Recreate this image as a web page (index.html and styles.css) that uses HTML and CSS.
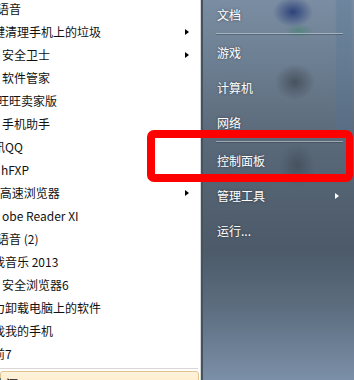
FILE: index.html
```html
<!DOCTYPE html>
<html lang="zh-CN">

<head>
    <meta charset="UTF-8">
    <meta name="viewport" content="width=device-width, initial-scale=1.0">
    <title>开始菜单</title>
    <link rel="stylesheet" href="styles.css">
</head>

<body>
    <div class="menu">
        <div class="programs">
            <ul class="list">
                <li class="item"><span class="txt part">语音</span></li>
                <li class="item has-sub"><span class="txt cut">键清理手机上的垃圾</span></li>
                <li class="item has-sub"><span class="txt">安全卫士</span></li>
                <li class="item"><span class="txt">软件管家</span></li>
                <li class="item"><span class="txt part">旺旺卖家版</span></li>
                <li class="item"><span class="txt">手机助手</span></li>
                <li class="item"><span class="txt cut">讯QQ</span></li>
                <li class="item"><span class="txt flush">hFXP</span></li>
                <li class="item has-sub"><span class="txt cut">0高速浏览器</span></li>
                <li class="item"><span class="txt">obe Reader XI</span></li>
                <li class="item"><span class="txt part">语音 (2)</span></li>
                <li class="item"><span class="txt cut">我音乐 2013</span></li>
                <li class="item"><span class="txt">安全浏览器6</span></li>
                <li class="item"><span class="txt cut">力卸载电脑上的软件</span></li>
                <li class="item"><span class="txt cut">找我的手机</span></li>
                <li class="item"><span class="txt cut">前7</span></li>
            </ul>
            <div class="sep"></div>
            <div class="all"><span class="txt cut">电源</span></div>
        </div>

        <div class="places">
            <div class="place">文档</div>
            <div class="rule"></div>
            <div class="place">游戏</div>
            <div class="place">计算机</div>
            <div class="place">网络</div>
            <div class="rule"></div>
            <div class="place">控制面板</div>
            <div class="place has-sub">管理工具</div>
            <div class="place">运行...</div>
        </div>

        <!-- 红框标注 -->
        <div class="mark"></div>
    </div>
</body>

</html>
```

FILE: styles.css
```css
body {
    margin: 0;
    overflow: hidden;
    font-family: "Noto Sans CJK SC", "Noto Sans", sans-serif;
    font-size: 12px;
}

.menu {
    position: relative;
    display: flex;
    width: 354px;
    height: 380px;
    overflow: hidden;
}

/* 左侧程序列表 */
.programs {
    width: 201px;
    flex-shrink: 0;
    box-sizing: border-box;
    background-color: #ffffff;
    border-right: 1px solid #d3d8dd;
    overflow: hidden;
}

.list {
    list-style: none;
    margin: -3px 0 0 0;
    padding: 0;
}

.item {
    display: flex;
    align-items: center;
    height: 23px;
    padding: 0 11px 0 2px;
    color: #111111;
    white-space: nowrap;
}

.txt {
    display: block;
}

.txt.cut {
    margin-left: -9px;
}

.txt.part {
    margin-left: -5px;
}

.txt.flush {
    margin-left: -1px;
}

.item.has-sub::after,
.place.has-sub::after {
    content: "";
    margin-left: auto;
    width: 0;
    height: 0;
    border-top: 3.5px solid transparent;
    border-bottom: 3.5px solid transparent;
    border-left: 4px solid #000000;
}

.sep {
    height: 1px;
    margin: 3px 2px 0 0;
    background-color: #d8d8d8;
}

.all {
    display: flex;
    align-items: center;
    height: 23px;
    margin: 2px 1px 0 0;
    padding: 0 2px;
    border: 1px solid #e3c38e;
    border-radius: 3px;
    background: linear-gradient(#fff3dd, #fde3b8);
    color: #111111;
}

/* 右侧系统位置 */
.places {
    flex: 1;
    border-left: 2px solid #46535f;
    padding: 0 11px 0 14px;
    color: #ffffff;
    background:
        radial-gradient(ellipse 20px 15px at 90px 12px, rgba(22, 42, 112, 0.75), transparent),
        radial-gradient(ellipse 14px 7px at 96px 31px, rgba(60, 130, 105, 0.55), transparent),
        radial-gradient(ellipse 20px 18px at 92px 82px, rgba(40, 44, 50, 0.5), transparent),
        radial-gradient(ellipse 18px 22px at 94px 165px, rgba(40, 46, 56, 0.35), transparent),
        linear-gradient(90deg, transparent 132px, rgba(80, 115, 150, 0.3) 134px, rgba(80, 115, 150, 0.3) 148px, transparent 150px) 0 0 / 100% 130px no-repeat,
        linear-gradient(#7a8da2 0, #6d7f92 60px, #5a6979 140px, #4c5a69 250px, #5d6e80 310px, #7b8fa8 380px);
}

.place {
    display: flex;
    align-items: center;
    height: 35px;
    text-shadow: 0 0 3px rgba(0, 0, 0, 0.45);
}

.place:first-child {
    margin-top: -3px;
}

.place.has-sub::after {
    border-left-color: #ffffff;
    margin-right: 4px;
}

.rule {
    height: 1px;
    margin: 1px 0;
    margin-left: -1px;
    background-color: rgba(200, 210, 220, 0.6);
    box-shadow: 0 1px 0 rgba(40, 50, 60, 0.35);
}

/* 标注框覆盖在菜单之上 */
.mark {
    position: absolute;
    left: 147px;
    top: 130px;
    width: 206px;
    height: 52px;
    box-sizing: border-box;
    border: 8px solid #ff0000;
    border-right-width: 7px;
    border-radius: 7px;
}
```
